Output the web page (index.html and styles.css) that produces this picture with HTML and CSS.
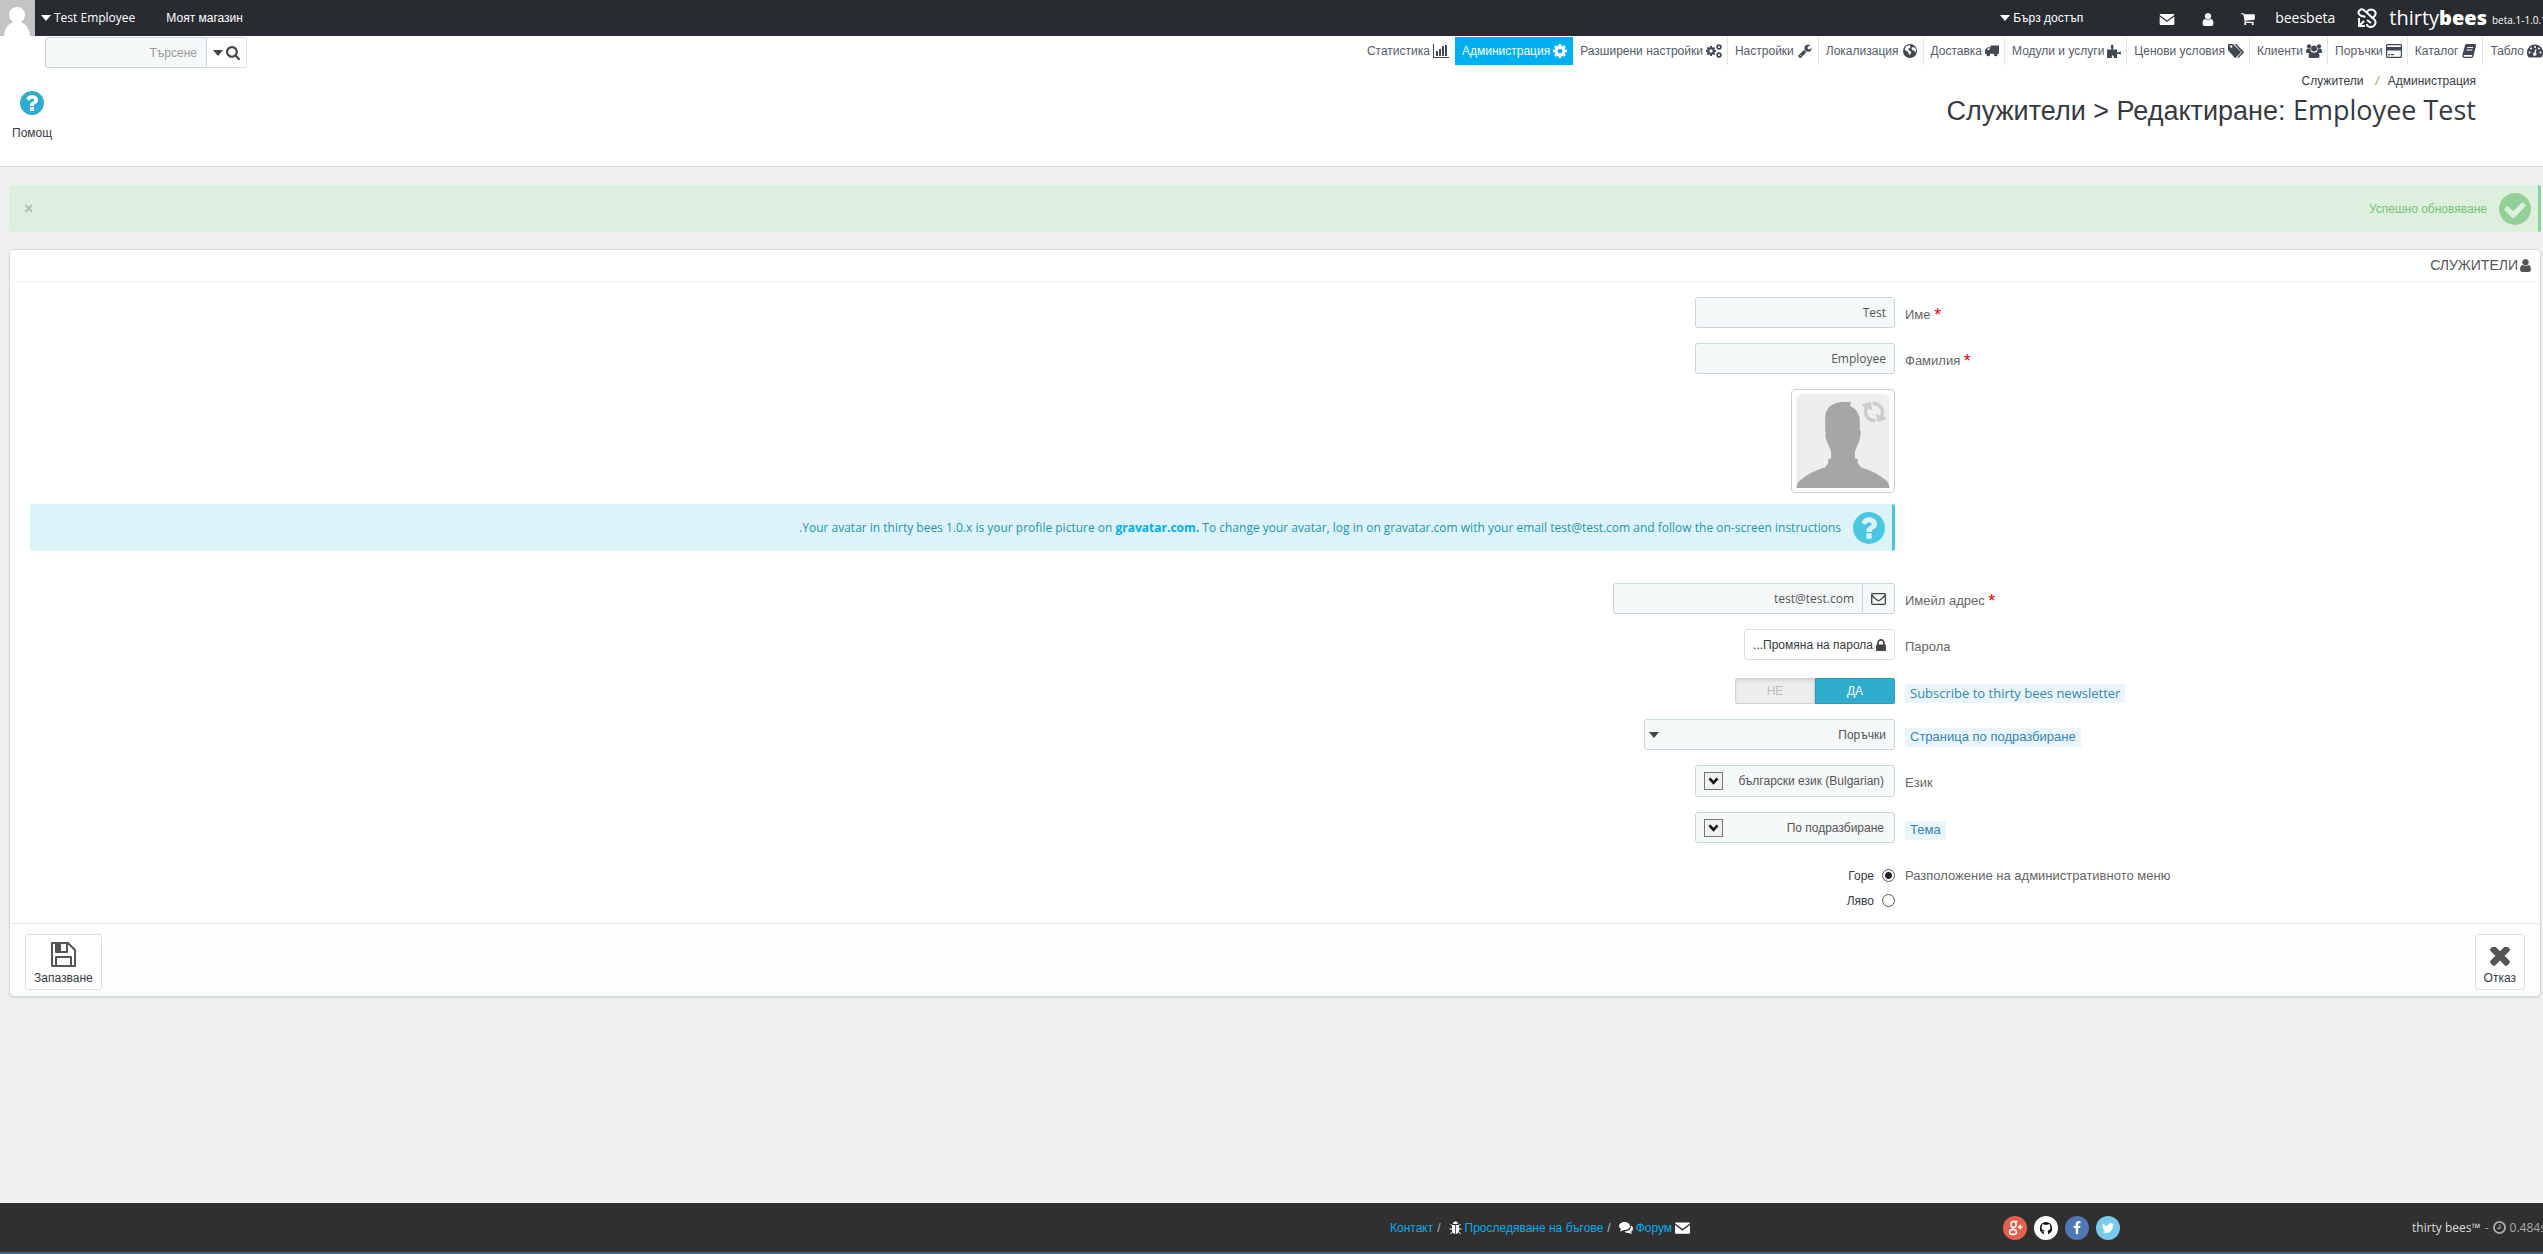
FILE: index.html
```html
<!DOCTYPE html>
<html lang="bg">
<head>
<meta charset="utf-8">
<title>Служители</title>
<link rel="stylesheet" href="styles.css">
</head>
<body>
<svg class="sprite" aria-hidden="true">
  <symbol id="i-caret" viewBox="0 0 10 6"><path d="M0 0h10L5 6z"/></symbol>
  <symbol id="i-envelope" viewBox="0 0 16 12"><path d="M0 1q0-1 1-1h14q1 0 1 1L8 7zM0 2.800l8 6 8-6V11q0 1-1 1H1q-1 0-1-1z"/></symbol>
  <symbol id="i-user" viewBox="256 128 1280 1536"><path d="M1536 1399q0 109-62.500 187t-150.500 78h-854q-88 0-150.500-78t-62.500-187q0-85 8.500-160.500t31.500-152 58.500-131 94-89 134.500-34.500q131 128 313 128t313-128q76 0 134.500 34.500t94 89 58.500 131 31.500 152 8.500 160.500zm-256-887q0 159-112.500 271.500t-271.500 112.500-271.500-112.500-112.500-271.500 112.500-271.500 271.500-112.500 271.500 112.500 112.500 271.500z"/></symbol>
  <symbol id="i-cart" viewBox="64 200 1680 1480"><path d="M704 1536q0 52-38 90t-90 38-90-38-38-90 38-90 90-38 90 38 38 90zm896 0q0 52-38 90t-90 38-90-38-38-90 38-90 90-38 90 38 38 90zm128-1088v512q0 24-16.500 42.500t-40.500 21.500l-1044 122q13 60 13 70 0 16-24 64h920q26 0 45 19t19 45-19 45-45 19h-1024q-26 0-45-19t-19-45q0-11 8-31.500t16-36 21.500-40 15.500-29.500l-177-823h-204q-26 0-45-19t-19-45 19-45 45-19h256q16 0 28.500 6.500t19.500 15.500 13 24.500 8 26 5.500 29.500 4.500 26h1201q26 0 45 19t19 45z"/></symbol>
  <symbol id="i-chart" viewBox="0 0 16 14"><path d="M0 0h1v13h15v1H0zM3 7h2v5H3zM6 5h2v7H6zM9 2h2v10H9zM12 1h2v11h-2z"/></symbol>
  <symbol id="i-cog" viewBox="128 128 1536 1536"><path d="M1152 896q0-106-75-181t-181-75-181 75-75 181 75 181 181 75 181-75 75-181zm512-109v222q0 12-8 23t-20 13l-185 28q-19 54-39 91 35 50 107 138 10 12 10 25t-9 23q-27 37-99 108t-94 71q-12 0-26-9l-138-108q-44 23-91 38-16 136-29 186-7 28-36 28h-222q-14 0-24.500-8.500t-11.500-21.500l-28-184q-49-16-90-37l-141 107q-10 9-25 9-14 0-25-11-126-114-165-168-7-10-7-23 0-12 8-23 15-21 51-66.500t54-70.500q-27-50-41-99l-183-27q-13-2-21-12.500t-8-23.500v-222q0-12 8-23t19-13l186-28q14-46 39-92-40-57-107-138-10-12-10-24 0-10 9-23 26-36 98.500-107.500t94.500-71.500q13 0 26 10l138 107q44-23 91-38 16-136 29-186 7-28 36-28h222q14 0 24.500 8.500t11.500 21.500l28 184q49 16 90 37l142-107q9-9 24-9 13 0 25 10 129 119 165 170 7 8 7 22 0 12-8 23-15 21-51 66.500t-54 70.500q26 50 41 98l183 28q13 2 21 12.500t8 23.500z"/></symbol>
  <symbol id="i-cogs" viewBox="0 0 16 14"><use href="#i-cog" x="0" y="2" width="10" height="10"/><use href="#i-cog" x="10" y="0" width="6" height="6"/><use href="#i-cog" x="10" y="8" width="6" height="6"/></symbol>
  <symbol id="i-wrench" viewBox="64 64 1680 1710"><path d="M448 1472q0-26-19-45t-45-19-45 19-19 45 19 45 45 19 45-19 19-45zm644-420l-682 682q-37 37-90 37-52 0-91-37l-106-108q-38-36-38-90 0-53 38-91l681-681q39 98 114.500 173.500t173.500 114.500zm634-435q0 39-23 106-47 134-164.500 217.500t-258.500 83.500q-185 0-316.500-131.500t-131.500-316.500 131.500-316.500 316.500-131.500q58 0 121.500 16.500t107.500 46.500q16 11 16 28t-16 28l-293 169v224l193 107q5-3 79-48.500t135.500-81 70.500-35.500q15 0 23.500 10t8.500 25z"/></symbol>
  <symbol id="i-globe" viewBox="0 0 14 14"><path fill-rule="evenodd" d="M7 0a7 7 0 1 1 0 14A7 7 0 0 1 7 0zM3 2.500L1.800 5 3 7l2 .5.500 2 1.500 2 .5-2L8.500 8 6 6.500 5 5l2-1 .5-2L6 1zM10 3L8.500 4l.5 2 2 .5 1.500 2 .5-1.500-.5-3z"/></symbol>
  <symbol id="i-truck" viewBox="0 0 15 12"><path d="M6 0h9v9h-1.500a2 2 0 0 1-4 0h-4a2 2 0 0 1-4 0H0V5l3-3h3zM2 5h3V3H3.500z" fill-rule="evenodd"/><circle cx="3.500" cy="10" r="1.700"/><circle cx="11.500" cy="10" r="1.700"/></symbol>
  <symbol id="i-puzzle" viewBox="0 0 14 14"><path d="M4.500 5.500Q3.500 3 4 1.500 5-.5 6.300 1.500 6.800 3 6 5.500h4V8q2 .5 2.500-.3Q14 7 14 9t-1.500 1.300Q11.500 9.500 10 10v4H6.500q.8-2-.8-2.800-1.500.5-.7 2.800H0V5.500z"/></symbol>
  <symbol id="i-tags" viewBox="0 0 16 14"><path fill-rule="evenodd" d="M0 1q0-1 1-1h4l7.500 7.500q.8.800 0 1.600L8 13.600q-.8.800-1.600 0L0 6zm2 1.500a1.200 1.200 0 1 0 2.400 0 1.200 1.200 0 0 0-2.400 0z"/><path d="M6.500 0h1.800l7.200 7.500q.8.800 0 1.600L11 13.600q-.8.800-1.600 0l4.400-5.200z"/></symbol>
  <symbol id="i-users" viewBox="0 0 16 14"><circle cx="3" cy="2.300" r="2.100"/><circle cx="13" cy="2.300" r="2.100"/><circle cx="8" cy="4.500" r="3"/><path d="M0 8q0-3.500 2-3.500h2.500Q4 7 5.500 8 4 8 3.500 9H1Q0 9 0 8zM16 8q0-3.500-2-3.500h-2.500Q12 7 10.500 8q1.500 0 2 1H15q1 0 1-1zM2.500 12.500q0-4.500 3-4.500Q8 9.500 10.500 8q3 0 3 4.500 0 1.500-2 1.500h-7q-2 0-2-1.500z"/></symbol>
  <symbol id="i-card" viewBox="0 0 16 14"><path fill-rule="evenodd" d="M1.500 0h13Q16 0 16 1.500v11q0 1.500-1.500 1.500h-13Q0 14 0 12.500v-11Q0 0 1.500 0zM1.200 3h13.600V1.500l-.5-.3H1.500l-.3.300zM1.200 6.500v6l.3.300h13l.3-.3v-6zM2 10h2v1.200H2zM5 10h3v1.200H5z"/></symbol>
  <symbol id="i-book" viewBox="0 0 14 14"><path fill-rule="evenodd" d="M4.500 0H13q1.300.3 1 1.800L11.500 12q-.4 2-2 2H2Q0 13.500.200 11.500L3 1.500Q3.300 0 4.500 0zM5.500 3l-.3 1h5.600l.3-1zM4.800 5.500l-.3 1h5.600l.3-1zM1.800 11q-.6 1.500.5 1.800h7.500l.5-1.800z"/></symbol>
  <symbol id="i-gauge" viewBox="0 0 16 13"><path fill-rule="evenodd" d="M8 0a8 8 0 0 1 7 12l-1 1H2l-1-1A8 8 0 0 1 8 0zM7 2.500a1 1 0 1 0 2 0 1 1 0 0 0-2 0zM3 4a1 1 0 1 0 2 0 1 1 0 0 0-2 0zM11 4a1 1 0 1 0 2 0 1 1 0 0 0-2 0zM1.500 8a1 1 0 1 0 2 0 1 1 0 0 0-2 0zM12.500 8a1 1 0 1 0 2 0 1 1 0 0 0-2 0zM8.500 4.500L7.500 8a1.700 1.700 0 1 0 1.300.4l.7-3.600z"/></symbol>
  <symbol id="i-search" viewBox="64 128 1664 1664"><path d="M1216 832q0-185-131.500-316.500t-316.500-131.500-316.500 131.500-131.500 316.500 131.500 316.500 316.500 131.500 316.500-131.500 131.500-316.500zm512 832q0 52-38 90t-90 38q-54 0-90-38l-343-342q-179 124-399 124-143 0-273.500-55.500t-225-150-150-225-55.500-273.500 55.500-273.500 150-225 225-150 273.500-55.500 273.500 55.500 225 150 150 225 55.500 273.500q0 220-124 399l343 343q37 37 37 90z"/></symbol>
  <symbol id="i-check" viewBox="128 128 1536 1536"><path d="M1412 734q0-28-18-46l-91-90q-19-19-45-19t-45 19l-408 407-226-226q-19-19-45-19t-45 19l-91 90q-18 18-18 46 0 27 18 45l362 362q19 19 45 19 27 0 46-19l543-543q18-18 18-45zm252 162q0 209-103 385.500t-279.500 279.500-385.500 103-385.500-103-279.500-279.500-103-385.500 103-385.500 279.500-279.500 385.500-103 385.500 103 279.500 279.500 103 385.500z"/></symbol>
  <symbol id="i-question" viewBox="128 128 1536 1536"><path d="M1024 1376v-192q0-14-9-23t-23-9h-192q-14 0-23 9t-9 23v192q0 14 9 23t23 9h192q14 0 23-9t9-23zm256-672q0-88-55.500-163t-138.500-116-170-41q-243 0-371 213-15 24 8 42l132 100q7 6 19 6 16 0 25-12 53-68 86-92 34-24 86-24 48 0 85.500 26t37.500 59q0 38-20 61t-68 45q-63 28-115.500 86.500t-52.500 125.500v36q0 14 9 23t23 9h192q14 0 23-9t9-23q0-19 21.500-49.500t54.500-49.500q32-18 49-28.500t46-35 44.500-48 28-60.500 12.500-81zm384 192q0 209-103 385.500t-279.500 279.500-385.500 103-385.500-103-279.500-279.500-103-385.500 103-385.500 279.500-279.500 385.500-103 385.500 103 279.500 279.500 103 385.500z"/></symbol>
  <symbol id="i-lock" viewBox="320 128 1152 1408"><path d="M640 768h512v-192q0-106-75-181t-181-75-181 75-75 181v192zm832 96v576q0 40-28 68t-68 28h-960q-40 0-68-28t-28-68v-576q0-40 28-68t68-28h32v-192q0-184 132-316t316-132 316 132 132 316v192h32q40 0 68 28t28 68z"/></symbol>
  <symbol id="i-times" viewBox="302 434 1188 1188"><path d="M1490 1322q0 40-28 68l-136 136q-28 28-68 28t-68-28l-294-294-294 294q-28 28-68 28t-68-28l-136-136q-28-28-28-68t28-68l294-294-294-294q-28-28-28-68t28-68l136-136q28-28 68-28t68 28l294 294 294-294q28-28 68-28t68 28l136 136q28 28 28 68t-28 68l-294 294 294 294q28 28 28 68z"/></symbol>
  <symbol id="i-save" viewBox="0 0 25 25"><path fill="none" stroke="currentColor" stroke-width="2" stroke-linejoin="round" d="M1 1h16l7 7v16H1zM5 24v-9h15v9M5 1v9h11V1"/><path d="M5 1h5v9H5z"/></symbol>
  <symbol id="i-mail-o" viewBox="0 0 15 12"><path fill="none" stroke="currentColor" stroke-width="1.300" d="M.7 1.500q0-.8.800-.8h12q.8 0 .8.800v9q0 .8-.8.800h-12q-.8 0-.8-.8zM1 2q1 2 5 5 1.500 1.200 3 0 4-3 5-5"/></symbol>
  <symbol id="i-bug" viewBox="0 0 12 14"><path d="M3.500 3a2.500 2.500 0 0 1 5 0zM2.500 4h3.100v9Q2.500 12.500 2.500 9zM6.400 4h3.100v5q0 3.500-3.100 4z"/><path fill="none" stroke="currentColor" d="M1 3l2 2M11 3L9 5M0 8h3M12 8H9M1 13l2-2.500M11 13l-2-2.500"/></symbol>
  <symbol id="i-chat" viewBox="0 0 14 12"><path d="M5.500 0C8.500 0 11 1.800 11 4S8.500 8 5.500 8L3 8.800.8 9.500 2 7Q0 6 0 4c0-2.200 2.500-4 5.500-4z"/><path d="M12 3.500q2 1 2 3T12 10l1.200 2-3.200-1q-3 .3-4.500-1.500Q12 9 12 4z"/></symbol>
  <symbol id="i-clock" viewBox="0 0 14 14"><circle cx="7" cy="7" r="6" fill="none" stroke="currentColor" stroke-width="2"/><path fill="none" stroke="currentColor" stroke-width="1.200" d="M7.500 3.500V8H4.500"/></symbol>
  <symbol id="i-refresh" viewBox="0 0 24 22"><path fill="none" stroke="currentColor" stroke-width="3.400" d="M5 7Q2 11 5 15.500T13.500 19.500M19 15q3-4 0-8.500T10.500 2.500"/><path d="M0 3.500L8.500 1l2 8.500-3.800-2L3 8zM24 18.500L15.500 21l-2-8.500 3.800 2L21 14z"/></symbol>
  <symbol id="i-google" viewBox="0 0 24 24"><g fill="none" stroke="#fff" stroke-width="1.500"><ellipse cx="10.500" cy="8.500" rx="2.600" ry="3"/><ellipse cx="10" cy="16" rx="3.500" ry="2.500"/><path d="M14.500 5.500h-4M10.500 11.500q-1.500 1 .5 2.300M15 11h4.500M17.200 8.800v4.500"/></g></symbol>
  <symbol id="i-github" viewBox="0 0 24 24"><path fill="#111" d="M12 6a6.300 6.300 0 0 0-2 12.200v-2Q8 16.500 7.500 15q1.200 1 2.500.5l.5-1Q7.500 14 7.500 11.500q0-1 .7-1.800-.2-1 .2-1.800 1 0 2 .8h3.200q1-.8 2-.8.400.8.200 1.800.7.800.7 1.800 0 2.500-3 3 .5.500.5 1.500v2.200A6.300 6.300 0 0 0 12 6z"/></symbol>
  <symbol id="i-facebook" viewBox="0 0 1792 1792"><path d="M1343 12v264h-157q-86 0-116 36t-30 108v189h293l-39 296h-254v759h-306v-759h-255v-296h255v-218q0-186 104-288.500t277-102.500q147 0 228 12z"/></symbol>
  <symbol id="i-twitter" viewBox="0 0 1792 1792"><path d="M1684 408q-67 98-162 167 1 14 1 42 0 130-38 259.500t-115.500 248.500-184.500 210.500-258 146-323 54.500q-271 0-496-145 35 4 78 4 225 0 401-138-105-2-188-64.500t-114-159.500q33 5 61 5 43 0 85-11-112-23-185.500-111.500t-73.500-205.500v-4q68 38 146 41-66-44-105-115t-39-154q0-88 44-163 121 149 294.500 238.500t371.500 99.500q-8-38-8-74 0-134 94.500-228.500t228.500-94.500q140 0 236 102 109-21 205-78-37 115-142 178 93-10 186-50z"/></symbol>
</svg>

<header class="topbar">
  <div class="topbar-side">
    <svg class="avatar" viewBox="0 0 35 36" aria-hidden="true"><rect width="35" height="36" fill="#c4c4c4"/><circle cx="17" cy="15" r="8" fill="#fff"/><path d="M4 36q1-11 9-14h8q8 3 9 14z" fill="#fff"/></svg>
    <a class="account latin" href="#"><svg class="caret"><use href="#i-caret"/></svg>Test Employee</a>
    <a class="shop" href="#">Моят магазин</a>
  </div>
  <div class="topbar-side">
    <a class="quick" href="#"><svg class="caret"><use href="#i-caret"/></svg>Бърз достъп</a>
    <div class="notices">
      <a href="#" aria-label="Съобщения"><svg class="mail"><use href="#i-envelope"/></svg></a>
      <a href="#" aria-label="Клиенти"><svg class="ic12"><use href="#i-user"/></svg></a>
      <a href="#" aria-label="Поръчки"><svg class="ic14"><use href="#i-cart"/></svg></a>
    </div>
    <a class="shopname latin" href="#">beesbeta</a>
    <a class="brand latin" href="#">
      <svg class="bee" viewBox="0 0 20 20" aria-hidden="true"><g fill="none" stroke="#fff" stroke-width="2"><path d="M2 10v8h6M3 17l4-4M8.500 9L3.500 7.500Q0 5 2.500 2.500 5 0 8 3l7 6.500Q19 12 18.500 15q-1 4-5 4-3 0-4-3"/><path d="M10 4q2-3.500 6-2 4 2 2 5.500-1 2-4 2.500M10 12l4 3"/></g></svg>
      <span class="wordmark">thirty<b>bees</b></span>
      <span class="version">beta.1-1.0.1</span>
    </a>
  </div>
</header>

<div class="menubar">
  <form class="search">
    <input type="text" placeholder="Търсене" aria-label="Търсене">
    <button type="button" aria-label="Търсене"><svg class="caret"><use href="#i-caret"/></svg><svg class="ic14"><use href="#i-search"/></svg></button>
  </form>
  <nav class="menu">
    <a href="#">Статистика<svg><use href="#i-chart"/></svg></a>
    <a class="active" href="#">Администрация<svg class="slim"><use href="#i-cog"/></svg></a>
    <a href="#">Разширени настройки<svg><use href="#i-cogs"/></svg></a>
    <a href="#">Настройки<svg><use href="#i-wrench"/></svg></a>
    <a href="#">Локализация<svg><use href="#i-globe"/></svg></a>
    <a href="#">Доставка<svg class="slim"><use href="#i-truck"/></svg></a>
    <a href="#">Модули и услуги<svg class="slim"><use href="#i-puzzle"/></svg></a>
    <a href="#">Ценови условия<svg><use href="#i-tags"/></svg></a>
    <a href="#">Клиенти<svg><use href="#i-users"/></svg></a>
    <a href="#">Поръчки<svg><use href="#i-card"/></svg></a>
    <a href="#">Каталог<svg><use href="#i-book"/></svg></a>
    <a href="#">Табло<svg><use href="#i-gauge"/></svg></a>
  </nav>
</div>

<div class="pagehead">
  <a class="help" href="#"><svg><use href="#i-question"/></svg>Помощ</a>
  <div class="titles">
    <div class="crumbs"><a href="#">Служители</a><i>/</i><a href="#">Администрация</a></div>
    <h1>Служители &gt; Редактиране: <span class="latin">Employee Test</span></h1>
  </div>
</div>

<main>
  <div class="alert success">
    <button type="button" class="close" aria-label="Затвори">×</button>
    <span>Успешно обновяване</span>
    <svg><use href="#i-check"/></svg>
  </div>

  <form class="panel">
    <h2>СЛУЖИТЕЛИ<svg><use href="#i-user"/></svg></h2>
    <div class="fields">
      <div class="row">
        <div class="control"><input class="box w200 latin" id="first" type="text" value="Test"></div>
        <label for="first">Име <em>*</em></label>
      </div>
      <div class="row">
        <div class="control"><input class="box w200 latin" id="last" type="text" value="Employee"></div>
        <label for="last">Фамилия <em>*</em></label>
      </div>
      <div class="row avatar-row">
        <div class="control stack">
          <div class="thumb">
            <svg viewBox="0 0 94 95" aria-hidden="true">
              <rect width="94" height="95" rx="6" fill="#eee"/>
              <path fill="#a6a6a6" d="M30 40l-1-3V22Q31 9 46 8h9l-1 4q10 5 10 16v9h1q0 9-4 16l-2 5v7l3 1v4l3 4q16 5 25 13 3 2 4 7-1 5-5 5H6q-5 0-6-5 1-5 4-7 9-8 25-13l3-4v-4l3-1v-7l-2-5q-4-8-4-13z"/>
            </svg>
            <svg class="refresh"><use href="#i-refresh"/></svg>
          </div>
          <div class="alert info latin">
            <span>.Your avatar in thirty bees 1.0.x is your profile picture on <a href="#">gravatar.com.</a> To change your avatar, log in on gravatar.com with your email test@test.com and follow the on-screen instructions</span>
            <svg><use href="#i-question"/></svg>
          </div>
        </div>
      </div>
      <div class="row">
        <div class="control"><div class="group"><input class="box latin" id="email" type="text" value="test@test.com"><span class="addon"><svg><use href="#i-mail-o"/></svg></span></div></div>
        <label for="email">Имейл адрес <em>*</em></label>
      </div>
      <div class="row">
        <div class="control"><button class="pw" id="pw" type="button">...Промяна на парола<svg><use href="#i-lock"/></svg></button></div>
        <label for="pw">Парола</label>
      </div>
      <div class="row">
        <div class="control">
          <div class="switch">
            <input type="radio" name="news" id="no"><label for="no">НЕ</label>
            <input type="radio" name="news" id="yes" checked><label for="yes">ДА</label>
          </div>
        </div>
        <div class="label latin"><span class="tip">Subscribe to thirty bees newsletter</span></div>
      </div>
      <div class="row">
        <div class="control"><div class="select w251"><select class="box" id="page"><option>Поръчки</option></select><svg class="caret"><use href="#i-caret"/></svg></div></div>
        <label for="page"><span class="tip">Страница по подразбиране</span></label>
      </div>
      <div class="row">
        <div class="control"><div class="select native w200"><select class="box tall" id="lang"><option>български език (Bulgarian)</option></select><svg class="arrow" viewBox="0 0 19 18"><path d="M5 6l4.500 5L14 6"/></svg></div></div>
        <label for="lang">Език</label>
      </div>
      <div class="row">
        <div class="control"><div class="select native w200"><select class="box" id="theme"><option>По подразбиране</option></select><svg class="arrow" viewBox="0 0 19 18"><path d="M5 6l4.500 5L14 6"/></svg></div></div>
        <label for="theme"><span class="tip">Тема</span></label>
      </div>
      <div class="row">
        <div class="control stack radios">
          <label>Горе<input type="radio" name="menu" checked></label>
          <label>Ляво<input type="radio" name="menu"></label>
        </div>
        <div class="label">Разположение на административното меню</div>
      </div>
    </div>
    <div class="actions">
      <button type="button"><svg class="save"><use href="#i-save"/></svg>Запазване</button>
      <button type="button"><svg class="cancel"><use href="#i-times"/></svg>Отказ</button>
    </div>
  </form>
</main>

<footer>
  <div></div>
  <div class="links">
    <a href="#">Контакт</a><span>/</span>
    <svg class="bug"><use href="#i-bug"/></svg><a href="#">Проследяване на бъгове</a><span>/</span>
    <svg class="chat"><use href="#i-chat"/></svg><a href="#">Форум</a><svg class="post"><use href="#i-envelope"/></svg>
  </div>
  <div class="social">
    <a class="gp" href="#" aria-label="Google+"><svg class="full"><use href="#i-google"/></svg></a>
    <a class="gh" href="#" aria-label="GitHub"><svg class="full"><use href="#i-github"/></svg></a>
    <a class="fb" href="#" aria-label="Facebook"><svg><use href="#i-facebook"/></svg></a>
    <a class="tw" href="#" aria-label="Twitter"><svg><use href="#i-twitter"/></svg></a>
  </div>
  <div class="credits latin"><b>thirty bees™</b> - <svg><use href="#i-clock"/></svg> 0.484s</div>
</footer>
</body>
</html>
```
FILE: styles.css
```css
* { box-sizing: border-box; }
html, body { height: 100%; }
body {
  margin: 0;
  display: flex;
  flex-direction: column;
  overflow-x: hidden;
  background: #eff0f2;
  color: #363a41;
  font: 12px/18px "Liberation Sans", Arial, sans-serif;
}
a { color: inherit; text-decoration: none; }
svg { fill: currentColor; flex: none; }
button, input, select { font: inherit; color: inherit; margin: 0; }
.sprite { position: absolute; width: 0; height: 0; }
.latin { font-family: "Open Sans", "Liberation Sans", sans-serif; }
.caret { width: 10px; height: 6px; }
.ic12 { width: 12px; height: 13px; }
.ic14 { width: 14px; height: 14px; }

/* top bar */
.topbar {
  display: flex;
  flex: none;
  justify-content: space-between;
  height: 36px;
  background: #282b30;
  color: #fff;
  white-space: nowrap;
}
.topbar-side { display: flex; align-items: center; }
.avatar { width: 35px; height: 36px; }
.account, .quick { display: flex; align-items: center; gap: 3px; }
.account { margin-left: 6px; }
.shop { margin-left: 31px; }
.notices { display: flex; align-items: center; gap: 27px; margin: 2px 20px 0 76px; }
.notices a { display: flex; }
.mail { width: 16px; height: 11px; }
.shopname { font-size: 14px; }
.brand { display: flex; align-items: center; margin-left: 22px; }
.bee { width: 20px; height: 20px; margin-right: 12px; }
.wordmark { font-size: 20px; }
.wordmark b { font-weight: 800; }
.version { width: 51px; margin: 4px 0 0 5px; font-size: 10px; }

/* menu */
.menubar {
  display: flex;
  flex: none;
  justify-content: space-between;
  padding: 1px 0 0 45px;
  height: 33px;
  background: #fff;
}
.search { display: flex; width: 202px; height: 31px; }
.search input {
  width: 162px;
  padding: 0 9px;
  border: 1px solid #c7d6db;
  border-radius: 3px 0 0 3px;
  background: #f5f8f9;
  text-align: right;
}
.search input::placeholder { color: #999; }
.search button {
  flex: 1;
  display: flex;
  align-items: center;
  justify-content: center;
  gap: 3px;
  padding: 0;
  border: 1px solid #dedede;
  border-left: 0;
  border-radius: 0 3px 3px 0;
  background: #fff;
  color: #444;
}
.menu { display: flex; height: 28px; margin-right: -6px; color: #545b66; white-space: nowrap; }
.menu a {
  display: flex;
  align-items: center;
  gap: 3px;
  padding: 0 5px 0 7px;
  border-right: 1px solid #e5e5e5;
}
.menu a:nth-child(-n+2) { border-color: transparent; }
.menu svg { width: 16px; height: 14px; color: #414853; }
.menu .slim { width: 14px; }
.menu .active { border-color: #00aff0; background: #00aff0; color: #fff; }
.menu .active svg { color: #fff; }

/* page heading */
.pagehead {
  display: flex;
  flex: none;
  justify-content: space-between;
  align-items: flex-start;
  height: 98px;
  padding: 3px 67px 0 12px;
  border-bottom: 1px solid #d8d8d8;
  background: #fff;
}
.help { display: flex; flex-direction: column; align-items: center; gap: 9px; padding-top: 19px; }
.help svg { width: 24px; height: 24px; color: #2eacce; }
.titles { text-align: right; }
.crumbs i { margin: 0 9px 0 12px; color: #72a63a; }
h1 { margin: 2px 0 0; font-size: 27px; line-height: 36px; font-weight: 400; }

/* alerts */
main { flex: 1 0 auto; padding: 18px 2px 0 9px; }
.alert {
  display: flex;
  align-items: center;
  justify-content: flex-end;
  gap: 12px;
  height: 47px;
  padding-right: 7px;
  border-right: 3px solid;
  border-radius: 3px;
}
.alert svg { width: 32px; height: 32px; }
.success { border-color: #8fd097; background: #ddf0de; color: #72c279; }
.success svg { color: #92d097; }
.success .close { margin: 0 auto 0 15px; }
.close { padding: 0; border: 0; background: none; color: #aebfae; font-size: 16px; font-weight: 700; line-height: 18px; }
.info { width: 100%; border-color: #4ac7e0; background: #dcf4f9; color: #1e94ab; }
.info svg { color: #4ac7e0; }
.info a { color: #00aff0; font-weight: 700; }

/* panel */
.panel {
  margin: 17px 0 0;
  border: 1px solid #d3d8db;
  border-radius: 5px;
  background: #fff;
  box-shadow: 0 1px 2px rgba(0, 0, 0, .1);
}
.panel h2 {
  display: flex;
  align-items: center;
  justify-content: flex-end;
  gap: 2px;
  height: 32px;
  margin: 0 4px;
  padding: 0 5px 1px 0;
  border-bottom: 1px solid #eee;
  color: #555;
  font-size: 14px;
  font-weight: 400;
}
.panel h2 svg { width: 11px; height: 13px; }
.fields { display: flex; flex-direction: column; gap: 15px; padding: 15px 15px 10px; }
.row { display: grid; grid-template-columns: 3fr 1fr; }
.avatar-row { margin-bottom: 17px; }
.control { display: flex; justify-content: flex-end; padding: 0 5px; }
.stack { flex-direction: column; align-items: flex-end; }
.row > label, .label { height: 27px; padding: 9px 0 0 5px; color: #666; font-size: 13px; line-height: 18px; }
.row em { color: #e00; font-size: 18px; font-style: normal; line-height: 14px; vertical-align: -2px; }
.tip { display: inline-block; height: 19px; padding: 0 5px; background: #e9f5fa; color: #3586ae; }
.box {
  width: 100%;
  height: 31px;
  padding: 0 8px;
  border: 1px solid #c7d6db;
  border-radius: 3px;
  background: #f5f8f9;
  color: #555;
  text-align: right;
}
.w200 { width: 200px; }
.w251 { width: 251px; }
.thumb {
  position: relative;
  width: 104px;
  height: 104px;
  margin-bottom: 11px;
  padding: 4px;
  border: 1px solid #ccc;
  border-radius: 4px;
}
.thumb svg { display: block; width: 94px; height: 94px; }
.thumb .refresh { position: absolute; top: 11px; right: 8px; width: 24px; height: 22px; color: #ccc; }
.group { display: flex; width: 282px; }
.group .box { border-radius: 3px 0 0 3px; }
.addon {
  display: flex;
  flex: none;
  align-items: center;
  justify-content: center;
  width: 32px;
  border: 1px solid #c7d6db;
  border-left: 0;
  border-radius: 0 3px 3px 0;
  background: #f5f8f9;
  color: #444;
}
.addon svg { width: 15px; height: 12px; }
.pw {
  display: flex;
  align-items: center;
  gap: 3px;
  height: 31px;
  padding: 0 8px;
  border: 1px solid #dedede;
  border-radius: 3px;
  background: #fff;
}
.pw svg { width: 10px; height: 12px; color: #444; }
.switch { display: flex; width: 160px; height: 26px; margin-top: 3px; overflow: hidden; border-radius: 3px; background: #eee; }
.switch input { position: absolute; opacity: 0; }
.switch label { flex: 1; color: #bbb; line-height: 26px; text-align: center; box-shadow: inset 0 0 0 1px #d3d3d3, inset 0 2px 4px rgba(0, 0, 0, .15); }
.switch input:checked + label { background: #2eacce; box-shadow: inset 0 0 0 1px #2a9bb9; color: #fff; }
.select { position: relative; }
.select select { display: block; appearance: none; text-align-last: right; }
.native select { padding: 0 10px; }
.select .tall { height: 32px; }
.select svg { position: absolute; pointer-events: none; }
.select .caret { top: 13px; left: 5px; color: #444; }
.arrow { top: 7px; left: 9px; width: 19px; height: 18px; border: 1px solid #777; background: #f0f0f0; fill: none; stroke: #111; stroke-width: 3; }
.radios { padding-top: 5px; }
.radios label { display: flex; align-items: center; gap: 8px; height: 25px; }
.radios input {
  appearance: none;
  width: 13px;
  height: 13px;
  border: 1px solid #555;
  border-radius: 50%;
  background: #fff;
}
.radios input:checked { background: radial-gradient(circle, #222 3px, #fff 4px); }
.actions {
  display: flex;
  justify-content: space-between;
  height: 73px;
  padding: 10px 15px 0;
  border-top: 1px solid #e6eaed;
  border-radius: 0 0 5px 5px;
  background: #fcfdfe;
}
.actions button {
  display: flex;
  flex-direction: column;
  align-items: center;
  justify-content: flex-end;
  height: 56px;
  padding: 0 8px 2px;
  border: 1px solid #dedede;
  border-radius: 3px;
  background: #fff;
}
.actions svg { color: #555; }
.save { width: 25px; height: 25px; margin-bottom: 2px; }
.cancel { width: 20px; height: 20px; margin-bottom: 2px; }

/* footer */
footer {
  display: grid;
  flex: none;
  grid-template-columns: 1390px 613px 1fr auto;
  align-items: center;
  height: 51px;
  border-bottom: 2px solid #3f6687;
  background: #303030;
  color: #bbb;
  white-space: nowrap;
}
.links { display: flex; align-items: center; gap: 3px; }
.links a { color: #00aff0; }
.links span { margin: 0 5px 0 1px; }
.links svg { color: #fff; }
.bug { width: 13px; height: 14px; }
.chat { width: 14px; height: 12px; }
.post { width: 15px; height: 12px; }
.social { display: flex; gap: 7px; }
.social a { display: flex; align-items: center; justify-content: center; width: 24px; height: 24px; border-radius: 50%; color: #fff; }
.social svg { width: 14px; height: 14px; }
.social .full { width: 24px; height: 24px; }
.gp { background: #e2614d; }
.gh { background: #fff; }
.fb { background: #4f78b8; }
.tw { background: #76cbee; }
.credits { display: flex; align-items: center; gap: 4px; width: 131px; overflow: hidden; color: #aaa; }
.credits b { color: #ddd; font-weight: 400; }
.credits svg { width: 13px; height: 13px; }
```
